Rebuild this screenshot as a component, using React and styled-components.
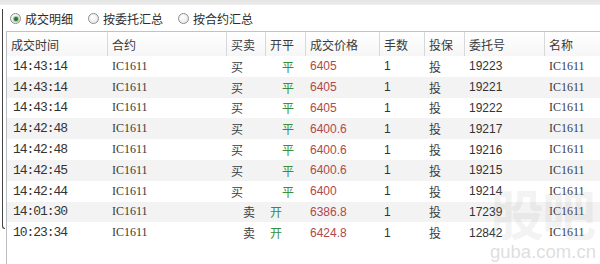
import React from "react";
import styled, { createGlobalStyle } from "styled-components";

const GlobalStyle = createGlobalStyle`
  html, body {
    margin: 0;
    padding: 0;
    background: #ffffff;
  }
  body {
    font-family: "Noto Sans CJK SC", "Liberation Sans", sans-serif;
  }
`;

const COLS = "101px 119px 39px 40px 74px 45px 40px 80px 1fr";

const trades = [
  { time: "14:43:14", side: "买", open: "平", price: "6405", order: "19223" },
  { time: "14:43:14", side: "买", open: "平", price: "6405", order: "19221" },
  { time: "14:43:14", side: "买", open: "平", price: "6405", order: "19222" },
  { time: "14:42:48", side: "买", open: "平", price: "6400.6", order: "19217" },
  { time: "14:42:48", side: "买", open: "平", price: "6400.6", order: "19216" },
  { time: "14:42:45", side: "买", open: "平", price: "6400.6", order: "19215" },
  { time: "14:42:44", side: "买", open: "平", price: "6400", order: "19214" },
  { time: "14:01:30", side: "卖", open: "开", price: "6386.8", order: "17239" },
  { time: "10:23:34", side: "卖", open: "开", price: "6424.8", order: "12842" },
];

const headers = ["成交时间", "合约", "买卖", "开平", "成交价格", "手数", "投保", "委托号", "名称"];

const App = () => {
  return (
    <>
      <GlobalStyle />
      <Page>
        <TopStrip />
        <Main>
          <Gutter>
            <FrameEdge />
          </Gutter>
          <Content>
            <RadioBar>
              <RadioItem>
                <RadioCircle $checked />
                <RadioLabel>成交明细</RadioLabel>
              </RadioItem>
              <RadioItem>
                <RadioCircle />
                <RadioLabel>按委托汇总</RadioLabel>
              </RadioItem>
              <RadioItem>
                <RadioCircle />
                <RadioLabel>按合约汇总</RadioLabel>
              </RadioItem>
            </RadioBar>

            <Table>
              <HeaderRow>
                {headers.map((h) => (
                  <HeaderCell key={h}>{h}</HeaderCell>
                ))}
              </HeaderRow>
              {trades.map((t, i) => (
                <Row key={i} $alt={i % 2 === 1}>
                  <TimeCell>{t.time}</TimeCell>
                  <CodeCell>IC1611</CodeCell>
                  <SideCell $indent={t.side === "卖"}>{t.side}</SideCell>
                  <OpenCell $indent={t.open === "平"}>{t.open}</OpenCell>
                  <PriceCell>{t.price}</PriceCell>
                  <NumCell>1</NumCell>
                  <TextCell>投</TextCell>
                  <NumCell>{t.order}</NumCell>
                  <CodeCell>IC1611</CodeCell>
                </Row>
              ))}
            </Table>
          </Content>
        </Main>
        <Watermark>
          <WatermarkBig>股吧</WatermarkBig>
          <WatermarkUrl>guba.com.cn</WatermarkUrl>
        </Watermark>
      </Page>
    </>
  );
};

export default App;

const Page = styled.div`
  position: relative;
  width: 600px;
  height: 264px;
  overflow: hidden;
  background: #ffffff;
  display: flex;
  flex-direction: column;
`;

const TopStrip = styled.div`
  height: 5px;
  flex-shrink: 0;
  background: linear-gradient(#e4e4e4, #ededed);
`;

const Main = styled.div`
  flex: 1;
  display: flex;
`;

const Gutter = styled.div`
  width: 6px;
  flex-shrink: 0;
  padding-top: 4px;
  box-sizing: border-box;
`;

const FrameEdge = styled.div`
  margin-left: 2px;
  height: 220px;
  width: 3px;
  box-sizing: border-box;
  border-left: 1.5px solid #444444;
  border-bottom: 1.5px solid #444444;
  border-bottom-left-radius: 4px;
`;

const Content = styled.div`
  flex: 1;
  display: flex;
  flex-direction: column;
`;

const RadioBar = styled.div`
  height: 26px;
  display: flex;
  align-items: center;
  gap: 15px;
  padding-left: 4px;
  padding-top: 1px;
  box-sizing: border-box;
`;

const RadioItem = styled.label`
  display: flex;
  align-items: center;
  gap: 4px;
`;

const RadioCircle = styled.span`
  position: relative;
  width: 11px;
  height: 11px;
  border-radius: 50%;
  box-sizing: border-box;
  border: 1px solid #8c8c8c;
  background: radial-gradient(circle at 40% 35%, #ffffff, #e2e2e2);

  &::after {
    content: "";
    display: ${(p) => (p.$checked ? "block" : "none")};
    position: absolute;
    left: 2.5px;
    top: 2.5px;
    width: 4px;
    height: 4px;
    border-radius: 50%;
    background: #2e6e34;
    box-shadow: 0 0 1px 1px #8fc593;
  }
`;

const RadioLabel = styled.span`
  font-family: "Noto Sans CJK SC", sans-serif;
  font-size: 12px;
  line-height: 14px;
  color: #2c2c2c;
`;

const Table = styled.div`
  flex: 1;
  border-left: 1px solid #b9bcc0;
  border-top: 1px solid #bfc2c6;
`;

const HeaderRow = styled.div`
  display: grid;
  grid-template-columns: ${COLS};
  height: 24px;
  background: linear-gradient(#ffffff, #f6f6f6);
`;

const HeaderCell = styled.div`
  display: flex;
  align-items: center;
  padding-left: 4px;
  border-right: 1px solid #d6d8db;
  font-family: "Noto Sans CJK SC", sans-serif;
  font-size: 12px;
  color: #3a3a3a;
  white-space: nowrap;
  overflow: hidden;

  &:last-child {
    border-right: none;
  }
`;

const Row = styled.div`
  display: grid;
  grid-template-columns: ${COLS};
  height: 20.8px;
  background: ${(p) => (p.$alt ? "#f3f3f3" : "#ffffff")};
`;

const Cell = styled.div`
  display: flex;
  align-items: center;
  padding-left: 4px;
  white-space: nowrap;
  overflow: hidden;
  color: #333333;
`;

const TimeCell = styled(Cell)`
  padding-left: 6px;
  font-family: "Liberation Mono", monospace;
  font-size: 13px;
  letter-spacing: -1.05px;
`;

const CodeCell = styled(Cell)`
  font-family: "Liberation Serif", serif;
  font-size: 12px;
  color: #3a3a3a;
`;

const TextCell = styled(Cell)`
  font-family: "Noto Sans CJK SC", sans-serif;
  font-size: 12px;
  color: #3c3c3c;
`;

const SideCell = styled(TextCell)`
  padding-left: ${(p) => (p.$indent ? "16px" : "4px")};
`;

const OpenCell = styled(TextCell)`
  padding-left: ${(p) => (p.$indent ? "16px" : "4px")};
  color: #35913a;
`;

const NumCell = styled(Cell)`
  font-family: "Liberation Sans", sans-serif;
  font-size: 12px;
`;

const PriceCell = styled(NumCell)`
  color: #b24848;
`;

const Watermark = styled.div`
  position: absolute;
  left: 490px;
  top: 186px;
  display: flex;
  flex-direction: column;
  pointer-events: none;
`;

const WatermarkBig = styled.div`
  font-family: "Noto Sans CJK SC", sans-serif;
  font-weight: 700;
  font-size: 54px;
  line-height: 54px;
  letter-spacing: -2px;
  color: rgba(170, 170, 170, 0.14);
  white-space: nowrap;
`;

const WatermarkUrl = styled.div`
  margin-top: 2px;
  font-family: "Liberation Sans", sans-serif;
  font-size: 18.5px;
  line-height: 20px;
  color: rgba(170, 170, 170, 0.4);
  white-space: nowrap;
`;
